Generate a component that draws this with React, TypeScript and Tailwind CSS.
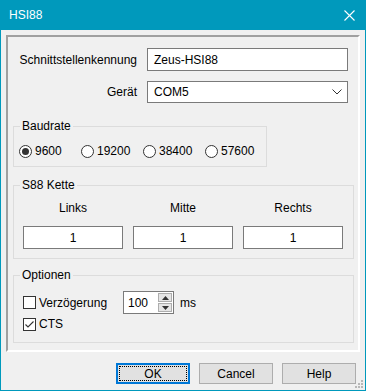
import React from 'react';

function GroupBox({ title, className, children }: { title: string; className?: string; children: React.ReactNode }) {
  return (
    <fieldset className={`border border-[#dcdcdc] ${className ?? ''}`}>
      <legend className="ml-[6px] px-[2px] leading-[16px]">{title}</legend>
      {children}
    </fieldset>
  );
}

function Radio({ label, checked }: { label: string; checked?: boolean }) {
  return (
    <div className="flex items-center h-[16px]">
      <span className="w-[13px] h-[13px] rounded-full border border-[#333333] bg-white flex items-center justify-center">
        {checked && <span className="w-[7px] h-[7px] rounded-full bg-[#333333]" />}
      </span>
      <span className="ml-[3px]">{label}</span>
    </div>
  );
}

function CheckBox({ label, checked }: { label: string; checked?: boolean }) {
  return (
    <div className="flex items-center h-[16px]">
      <span className="w-[13px] h-[13px] border border-[#333333] bg-white flex items-center justify-center">
        {checked && (
          <svg width="11" height="11" viewBox="0 0 11 11">
            <path d="M1.5 5.5 L4 8 L9.5 2.5" fill="none" stroke="#333333" strokeWidth="1.1" />
          </svg>
        )}
      </span>
      <span className="ml-[3px]">{label}</span>
    </div>
  );
}

function NumberBox({ value }: { value: string }) {
  return (
    <div className="w-[100px] h-[23px] border border-[#7a7a7a] bg-white flex items-center justify-center">{value}</div>
  );
}

function Button({ label, isDefault }: { label: string; isDefault?: boolean }) {
  if (isDefault) {
    return (
      <div className="w-[74px] h-[21px] border-2 border-[#0078d7] bg-[#e1e1e1] p-px">
        <div className="h-full border border-dotted border-black flex items-center justify-center">{label}</div>
      </div>
    );
  }
  return (
    <div className="w-[74px] h-[21px] border border-[#adadad] bg-[#e1e1e1] flex items-center justify-center">{label}</div>
  );
}

export default function App() {
  return (
    <div className="w-[366px] h-[391px] flex flex-col bg-[#0099bc] text-[12px] text-black font-['Liberation_Sans',Arial,sans-serif]">
      {/* Titelleiste */}
      <div className="h-[30px] flex items-center justify-between pl-[9px] pr-[11px] text-white">
        <span>HSI88</span>
        <svg width="11" height="11" viewBox="0 0 11 11">
          <path d="M0.5 0.5 L10.5 10.5 M10.5 0.5 L0.5 10.5" stroke="white" strokeWidth="1.1" />
        </svg>
      </div>

      <div className="relative flex-1 mx-px mb-px bg-[#f0f0f0] flex flex-col px-[5px] pt-[5px]">
        <div className="h-[317px] border-2 border-t-[#a0a0a0] border-l-[#a0a0a0] border-r-white border-b-white flex flex-col pt-[11px]">
          <div className="flex items-center">
            <span className="w-[129px] text-right">Schnittstellenkennung</span>
            <div className="ml-[10px] w-[201px] h-[23px] border border-[#7a7a7a] bg-white flex items-center pl-[6px]">Zeus-HSI88</div>
          </div>
          <div className="flex items-center mt-[10px]">
            <span className="w-[129px] text-right">Gerät</span>
            <div className="ml-[10px] w-[201px] h-[22px] border border-[#7a7a7a] bg-white flex items-center justify-between pl-[6px] pr-[5px]">
              <span>COM5</span>
              <svg width="10" height="6" viewBox="0 0 10 6">
                <path d="M0.5 0.5 L5 5 L9.5 0.5" fill="none" stroke="#333333" strokeWidth="1" />
              </svg>
            </div>
          </div>

          <GroupBox title="Baudrate" className="mt-[15px] ml-[5px] w-[254px]">
            <div className="flex pt-[9px] pb-[7px] pl-[5px]">
              <div className="w-[62px]"><Radio label="9600" checked /></div>
              <div className="w-[62px]"><Radio label="19200" /></div>
              <div className="w-[62px]"><Radio label="38400" /></div>
              <div><Radio label="57600" /></div>
            </div>
          </GroupBox>

          <GroupBox title="S88 Kette" className="mt-[10px] ml-[5px] w-[341px]">
            <div className="pl-[9px] pr-[10px] pb-[9px]">
              <div className="flex gap-[10px] mt-[7px] leading-[16px]">
                <span className="w-[100px] text-center">Links</span>
                <span className="w-[100px] text-center">Mitte</span>
                <span className="w-[100px] text-center">Rechts</span>
              </div>
              <div className="flex gap-[10px] mt-[10px]">
                <NumberBox value="1" />
                <NumberBox value="1" />
                <NumberBox value="1" />
              </div>
            </div>
          </GroupBox>

          <GroupBox title="Optionen" className="mt-[8px] ml-[5px] w-[341px]">
            <div className="pl-[9px] pb-[10px]">
              <div className="flex items-center mt-[8px] h-[23px]">
                <div className="w-[100px]"><CheckBox label="Verzögerung" /></div>
                <div className="w-[51px] h-[23px] border border-[#7a7a7a] bg-white flex">
                  <span className="flex-1 flex items-center pl-[4px]">100</span>
                  <div className="w-[16px] flex flex-col p-px gap-px">
                    <div className="flex-1 border border-[#adadad] bg-[#e5e5e5] flex items-center justify-center">
                      <svg width="7" height="4" viewBox="0 0 7 4"><path d="M0 4 L3.5 0 L7 4 Z" fill="#333333" /></svg>
                    </div>
                    <div className="flex-1 border border-[#adadad] bg-[#e5e5e5] flex items-center justify-center">
                      <svg width="7" height="4" viewBox="0 0 7 4"><path d="M0 0 L3.5 4 L7 0 Z" fill="#333333" /></svg>
                    </div>
                  </div>
                </div>
                <span className="ml-[6px]">ms</span>
              </div>
              <div className="mt-[2px]"><CheckBox label="CTS" checked /></div>
            </div>
          </GroupBox>
        </div>

        <div className="flex justify-end gap-[9px] mt-[11px] mr-[4px]">
          <Button label="OK" isDefault />
          <Button label="Cancel" />
          <Button label="Help" />
        </div>

        {/* Größenänderungsgriff */}
        <svg className="absolute right-[1px] bottom-[1px]" width="9" height="9" viewBox="0 0 9 9">
          <rect x="6" y="0" width="2" height="2" fill="#b8b8b8" />
          <rect x="3" y="3" width="2" height="2" fill="#b8b8b8" />
          <rect x="6" y="3" width="2" height="2" fill="#b8b8b8" />
          <rect x="0" y="6" width="2" height="2" fill="#b8b8b8" />
          <rect x="3" y="6" width="2" height="2" fill="#b8b8b8" />
          <rect x="6" y="6" width="2" height="2" fill="#b8b8b8" />
        </svg>
      </div>
    </div>
  );
}
